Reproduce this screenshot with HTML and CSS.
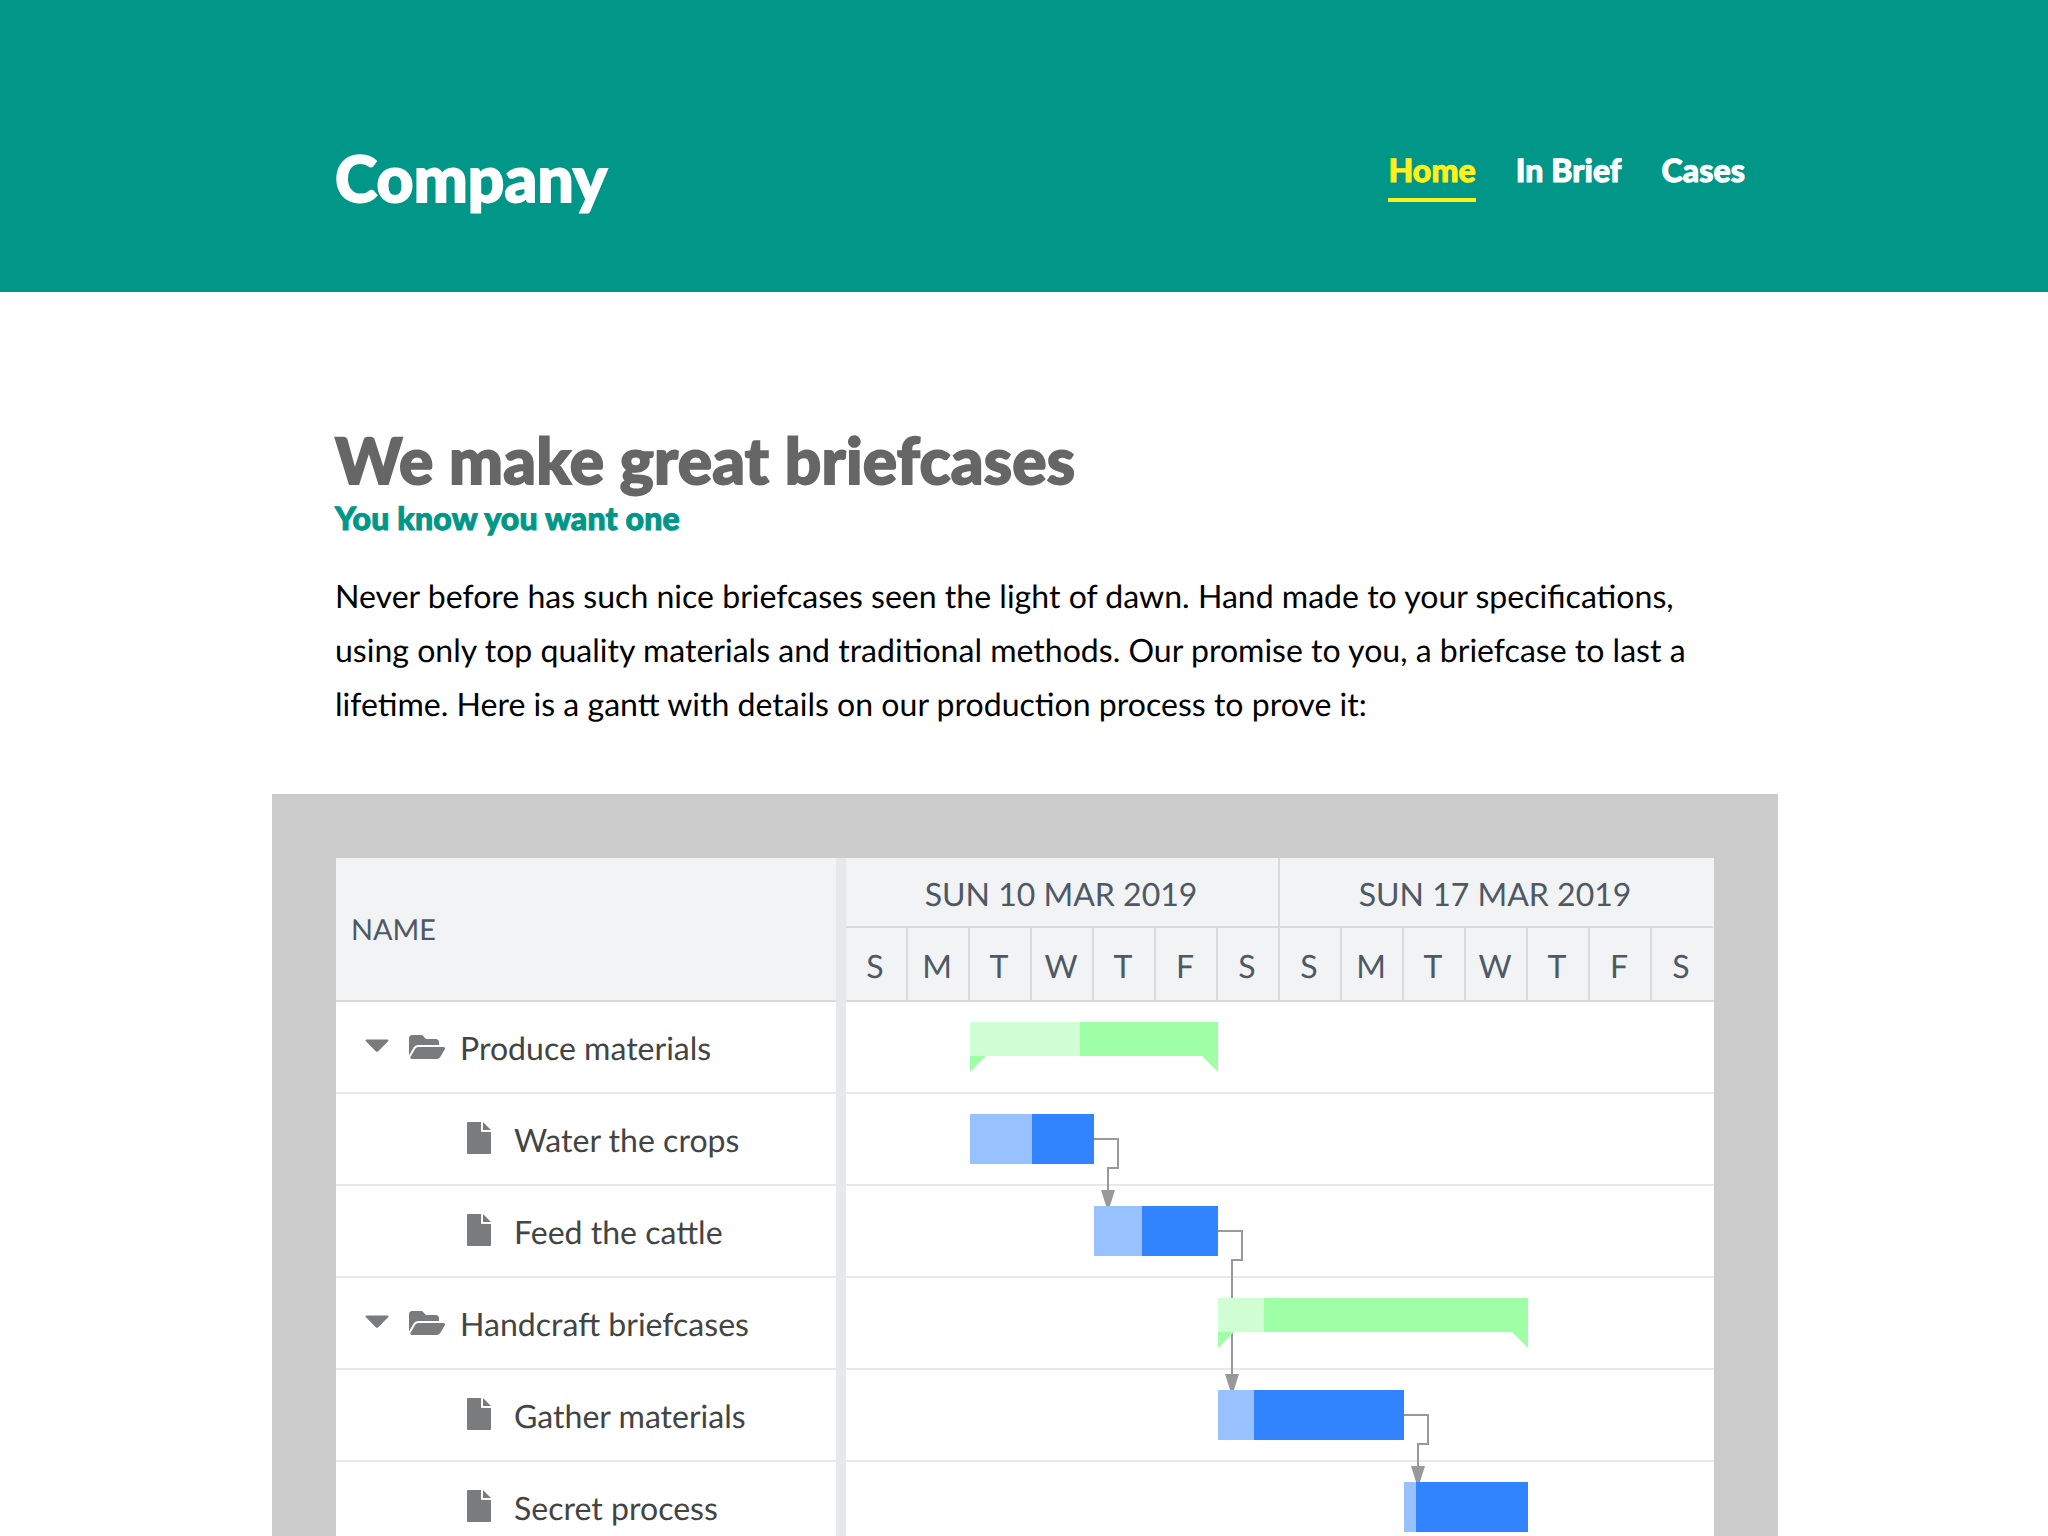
FILE: index.html
```html
<!DOCTYPE html>
<html lang="en">
<head>
<meta charset="utf-8">
<title>Company</title>
<link rel="stylesheet" href="styles.css">
</head>
<body>
<svg class="sprite" aria-hidden="true">
  <symbol id="caret" viewBox="0 0 24 14"><path d="M1.6 0.4H22.4C23.5 0.4 23.8 1.6 23.1 2.3L13 12.4C12.4 13 11.6 13 11 12.4L0.9 2.3C0.2 1.6 0.5 0.4 1.6 0.4Z"/></symbol>
  <symbol id="folder" viewBox="0 0 576 512"><path d="M572.694 292.093L500.27 416.248A63.997 63.997 0 0 1 444.989 448H45.025c-18.523 0-30.064-20.093-20.731-36.093l72.424-124.155A64 64 0 0 1 152 256h399.964c18.523 0 30.064 20.093 20.73 36.093zM152 224h328v-48c0-26.51-21.49-48-48-48H272l-64-64H48C21.49 64 0 85.490 0 112v278.046l69.077-118.418C86.214 242.250 117.989 224 152 224z"/></symbol>
  <symbol id="file" viewBox="0 0 24 32"><path d="M14 0H1Q0 0 0 1V31Q0 32 1 32H23Q24 32 24 31V10H15Q14 10 14 9ZM16 0V8H24Z"/></symbol>
</svg>
<header class="site-header">
  <div class="brand">Company</div>
  <nav class="nav">
    <a class="nav-link active">Home</a>
    <a class="nav-link">In Brief</a>
    <a class="nav-link">Cases</a>
  </nav>
</header>
<main class="content">
  <h1 class="title">We make great briefcases</h1>
  <h2 class="subtitle">You know you want one</h2>
  <p class="intro">Never before has such nice briefcases seen the light of dawn. Hand made to your specifications, using only top quality materials and traditional methods. Our promise to you, a briefcase to last a lifetime. Here is a gantt with details on our production process to prove it:</p>
</main>
<section class="frame">
  <div class="gantt">
    <div class="tree">
      <div class="tree-head">NAME</div>
      <div class="row parent"><svg class="caret"><use href="#caret"/></svg><svg class="folder"><use href="#folder"/></svg><span class="label">Produce materials</span></div>
      <div class="row leaf"><svg class="file"><use href="#file"/></svg><span class="label">Water the crops</span></div>
      <div class="row leaf"><svg class="file"><use href="#file"/></svg><span class="label">Feed the cattle</span></div>
      <div class="row parent"><svg class="caret"><use href="#caret"/></svg><svg class="folder"><use href="#folder"/></svg><span class="label">Handcraft briefcases</span></div>
      <div class="row leaf"><svg class="file"><use href="#file"/></svg><span class="label">Gather materials</span></div>
      <div class="row leaf"><svg class="file"><use href="#file"/></svg><span class="label">Secret process</span></div>
    </div>
    <div class="splitter"></div>
    <div class="timeline">
      <div class="weeks"><div class="week">SUN 10 MAR 2019</div><div class="week">SUN 17 MAR 2019</div></div>
      <div class="days">
        <div class="day">S</div><div class="day">M</div><div class="day">T</div><div class="day">W</div><div class="day">T</div><div class="day">F</div><div class="day">S</div>
        <div class="day">S</div><div class="day">M</div><div class="day">T</div><div class="day">W</div><div class="day">T</div><div class="day">F</div><div class="day">S</div>
      </div>
      <div class="canvas">
        <div class="row"></div><div class="row"></div><div class="row"></div><div class="row"></div><div class="row"></div><div class="row"></div>
        <svg class="links" viewBox="0 0 868 552">
          <path class="link" d="M248 137H272V166H262V190M372 229H396V258H386V374"/>
          <path class="link" d="M558 413H582V442H572V466"/>
          <path class="arrow" d="M255 188h14l-7 22zM379 372h14l-7 22zM565 464h14l-7 22z"/>
        </svg>
        <div class="bar group" style="left:124px;top:20px;width:248px"><div class="done" style="width:110px"></div></div>
        <div class="bar task" style="left:124px;top:112px;width:124px"><div class="done" style="width:62px"></div></div>
        <div class="bar task" style="left:248px;top:204px;width:124px"><div class="done" style="width:48px"></div></div>
        <div class="bar group" style="left:372px;top:296px;width:310px"><div class="done" style="width:46px"></div></div>
        <div class="bar task" style="left:372px;top:388px;width:186px"><div class="done" style="width:36px"></div></div>
        <div class="bar task" style="left:558px;top:480px;width:124px"><div class="done" style="width:12px"></div></div>
      </div>
    </div>
  </div>
</section>
</body>
</html>
```
FILE: styles.css
```css
* { box-sizing: border-box; }
html, body { height: 1536px; overflow: hidden; }
body { margin: 0; background: #fff; color: #000; font: 32px/54px Lato, sans-serif; text-rendering: geometricPrecision; }
.sprite { display: none; }
.site-header { height: 292px; background: #009688; padding: 139px 303px 0 335px; display: flex; justify-content: space-between; align-items: flex-start; }
.brand { font-size: 64px; line-height: 78px; font-weight: 900; color: #fff; letter-spacing: 0.15px; -webkit-text-stroke: 1.8px #fff; }
.nav { display: flex; gap: 40px; }
.nav-link { color: #fff; font-weight: 900; line-height: 62px; height: 63px; letter-spacing: 0.1px; -webkit-text-stroke: 1px currentColor; }
.nav-link.active { color: #fff11a; border-bottom: 4px solid #fff11a; }
.content { padding: 129px 304px 0 335px; }
.title { margin: 0; font-size: 64px; line-height: 78px; font-weight: 900; color: #666; letter-spacing: 0.26px; -webkit-text-stroke: 1.8px #666; }
.subtitle { margin: 0; font-size: 32px; line-height: 38px; font-weight: 900; color: #009688; letter-spacing: 0.19px; -webkit-text-stroke: 1px #009688; }
.intro { margin: 32px 0 0; width: 1378px; font-size: 32.06px; }
.frame { margin: 63px 0 0 272px; width: 1506px; height: 760px; padding: 64px; background: #ccc; }
.gantt { display: flex; width: 1378px; height: 696px; background: #fff; }
.tree { width: 500px; }
.tree-head { height: 144px; border-bottom: 2px solid #d8d9da; background: #f2f3f5; color: #4d5964; font-size: 28.8px; line-height: 144px; padding-left: 15px; }
.row { height: 92px; border-bottom: 2px solid #e7e8ea; display: flex; align-items: center; color: #434444; fill: #797b7d; }
.parent { padding-left: 28.5px; }
.leaf { padding-left: 131px; }
.label { padding-top: 2px; font-size: 32.06px; }
.caret { width: 24px; height: 14px; margin: 0 20px 2px 0; }
.folder { width: 36px; height: 32px; margin-right: 15.5px; }
.file { width: 24px; height: 32px; margin: 0 23px 2px 0; }
.splitter { width: 10px; background: #e7e8ea; }
.timeline { width: 868px; }
.weeks, .days { display: flex; background: #f2f3f5; color: #4d5964; text-align: center; }
.weeks { height: 70px; }
.week { width: 434px; padding-right: 2px; border-right: 2px solid #d8d9da; border-bottom: 2px solid #d8d9da; line-height: 72px; }
.week:last-child { border-right-color: #f2f3f5; }
.days { height: 74px; border-bottom: 2px solid #d8d9da; }
.day { width: 62px; padding-right: 2px; border-right: 2px solid #d8d9da; line-height: 76px; }
.day:last-child { border-right-color: transparent; }
.canvas { position: relative; }
.links { position: absolute; left: 0; top: 0; width: 868px; height: 552px; }
.link { fill: none; stroke: #999; stroke-width: 2; }
.arrow { fill: #999; }
.bar { position: absolute; }
.done { height: 100%; background: rgba(255, 255, 255, 0.5); }
.task { height: 50px; background: #3183fe; }
.group { height: 34px; background: #9effa6; }
.group::before, .group::after { content: ""; position: absolute; top: 34px; width: 16px; height: 16px; background: #9effa6; }
.group::before { left: 0; clip-path: polygon(0 0, 100% 0, 0 100%); }
.group::after { right: 0; clip-path: polygon(0 0, 100% 0, 100% 100%); }
```
